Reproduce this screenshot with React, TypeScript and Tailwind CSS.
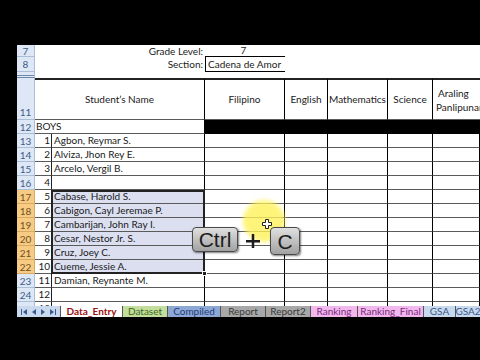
import clsx from 'clsx';

const cols = ['w-[80px]', 'w-[43px]', 'w-[60px]', 'w-[45px]', 'w-[47px]'];

const students: [number, string][] = [
    [1, 'Agbon, Reymar S.'],
    [2, 'Alviza, Jhon Rey E.'],
    [3, 'Arcelo, Vergil B.'],
    [4, ''],
    [5, 'Cabase, Harold S.'],
    [6, 'Cabigon, Cayl Jeremae P.'],
    [7, 'Cambarijan, John Ray I.'],
    [8, 'Cesar, Nestor Jr. S.'],
    [9, 'Cruz, Joey C.'],
    [10, 'Cueme, Jessie A.'],
    [11, 'Damian, Reynante M.'],
    [12, ''],
];

const RowHead = ({ n, sel }: { n: number; sel?: boolean }) => (
    <div
        className={clsx(
            'w-[18px] shrink-0 flex items-center justify-center border-r border-b text-[10px] leading-none',
            sel ? 'bg-[#f7cb84] border-[#d8ab62] text-[#6f5020]' : 'bg-[#dde7f5] border-[#a9bfd8] text-[#3d5b86]'
        )}
    >
        {n}
    </div>
);

const DataRow = ({ n, idx, name, sel }: { n: number; idx: number; name: string; sel: boolean }) => (
    <div className="flex h-[14px] shrink-0">
        <RowHead n={n} sel={sel} />
        <div className="w-[17px] shrink-0 border-r border-b border-r-[#222] border-b-[#5a5a5a] text-right pr-[1px] leading-[13px]">
            {idx}
        </div>
        <div
            className={clsx(
                'w-[153px] shrink-0 border-r border-b border-r-black border-b-[#5a5a5a] pl-[2px] leading-[13px] whitespace-nowrap',
                sel && 'bg-[#dbdff0]'
            )}
        >
            {name}
        </div>
        {cols.map((c) => (
            <div key={c} className={clsx(c, 'shrink-0 border-r border-b border-r-black border-b-[#5a5a5a]')} />
        ))}
    </div>
);

const Tab = ({ w, bg, color, label }: { w: string; bg: string; color: string; label: string }) => (
    <div className={clsx(w, bg, color, 'shrink-0 h-full flex justify-center overflow-hidden border-l border-l-[#555] leading-[11px]')}>
        {label}
    </div>
);

export default function App() {
    return (
        <div className="w-[480px] h-[360px] bg-black overflow-hidden relative font-['Lato',sans-serif] text-[10px] text-[#1a1a1a]">
            <div className="mt-[45px] ml-[17px] w-[463px] bg-white relative flex flex-col">
                {/* row 7 */}
                <div className="flex h-[12px]">
                    <RowHead n={7} />
                    <div className="w-[170px] shrink-0 text-right pr-[2px] leading-[12px]">Grade Level:</div>
                    <div className="w-[80px] shrink-0 border-b border-black text-center pr-[3px] leading-[11px]">7</div>
                </div>
                {/* row 8 */}
                <div className="flex h-[15px]">
                    <RowHead n={8} />
                    <div className="w-[170px] shrink-0 text-right pr-[2px] leading-[14px]">Section:</div>
                    <div className="w-[80px] shrink-0 border-l border-b border-black pl-[2px] leading-[14px] whitespace-nowrap">Cadena de Amor</div>
                </div>
                {/* hidden rows 9-10 */}
                <div className="flex h-[6px]">
                    <div className="w-[18px] shrink-0 bg-[#dde7f5] border-r border-[#a9bfd8] border-b-[3px] border-b-[#6f87a8] border-double" />
                </div>
                {/* row 11 header */}
                <div className="flex h-[42px]">
                    <div className="w-[18px] shrink-0 bg-[#dde7f5] border-r border-b border-[#a9bfd8] text-[#3d5b86] flex items-end justify-center pb-[2px] leading-none">
                        11
                    </div>
                    <div className="w-[170px] shrink-0 border-t-2 border-t-[#222] border-r border-r-black border-b border-b-[#5a5a5a] flex items-center justify-center">
                        Student’s Name
                    </div>
                    <div className="w-[80px] shrink-0 border-t-2 border-t-[#222] border-r border-r-black border-b border-b-[#5a5a5a] flex items-center justify-center">
                        Filipino
                    </div>
                    <div className="w-[43px] shrink-0 border-t-2 border-t-[#222] border-r border-r-black border-b border-b-[#5a5a5a] flex items-center justify-center">
                        English
                    </div>
                    <div className="w-[60px] shrink-0 border-t-2 border-t-[#222] border-r border-r-black border-b border-b-[#5a5a5a] flex items-center justify-center whitespace-nowrap">
                        Mathematics
                    </div>
                    <div className="w-[45px] shrink-0 border-t-2 border-t-[#222] border-r border-r-black border-b border-b-[#5a5a5a] flex items-center justify-center">
                        Science
                    </div>
                    <div className="w-[47px] shrink-0 border-t-2 border-t-[#222] border-b border-b-[#5a5a5a] flex flex-col justify-center pl-[3px] leading-[14px] whitespace-nowrap overflow-hidden">
                        <span className="pl-[2px]">Araling</span>
                        <span>Panlipunan</span>
                    </div>
                </div>
                {/* row 12 */}
                <div className="flex h-[14px]">
                    <RowHead n={12} />
                    <div className="w-[170px] shrink-0 border-r border-b border-r-black border-b-[#5a5a5a] pl-[1px] leading-[13px]">BOYS</div>
                    <div className="flex-1 bg-black" />
                </div>
                {students.map(([idx, name], i) => (
                    <DataRow key={idx} n={13 + i} idx={idx} name={name} sel={i >= 4 && i <= 9} />
                ))}
                {/* row 25, cut off */}
                <div className="h-[4px] overflow-hidden">
                    <div className="flex h-[14px]">
                        <RowHead n={25} />
                        <div className="w-[17px] shrink-0 border-r border-r-[#222] text-right pr-[1px] leading-[13px]">13</div>
                        <div className="w-[153px] shrink-0 border-r border-r-black" />
                        {cols.map((c) => (
                            <div key={c} className={clsx(c, 'shrink-0 border-r border-r-black')} />
                        ))}
                    </div>
                </div>
                {/* sheet tabs */}
                <div className="flex h-[11px] text-[10px] bg-[#e4ecf7]">
                    <div className="w-[43px] shrink-0 bg-[#c9d9ee] flex items-center justify-around px-[2px]">
                        <svg width="6" height="6" viewBox="0 0 6 6"><rect x="0" y="0" width="1" height="6" fill="#3a5a90" /><path d="M6 0 L2 3 L6 6 Z" fill="#3a5a90" /></svg>
                        <svg width="5" height="6" viewBox="0 0 5 6"><path d="M5 0 L1 3 L5 6 Z" fill="#3a5a90" /></svg>
                        <svg width="5" height="6" viewBox="0 0 5 6"><path d="M0 0 L4 3 L0 6 Z" fill="#3a5a90" /></svg>
                        <svg width="6" height="6" viewBox="0 0 6 6"><path d="M0 0 L4 3 L0 6 Z" fill="#3a5a90" /><rect x="5" y="0" width="1" height="6" fill="#3a5a90" /></svg>
                    </div>
                    <Tab w="w-[62px]" bg="bg-white" color="text-[#9a1212] font-bold" label="Data_Entry" />
                    <Tab w="w-[45px]" bg="bg-[#c2dd9c]" color="text-[#3c6a1c]" label="Dataset" />
                    <Tab w="w-[53px]" bg="bg-[#8ea8d6]" color="text-[#1f3c78]" label="Compiled" />
                    <Tab w="w-[45px]" bg="bg-[#a8a8a8]" color="text-[#3a3a3a]" label="Report" />
                    <Tab w="w-[45px]" bg="bg-[#a8a8a8]" color="text-[#3a3a3a]" label="Report2" />
                    <Tab w="w-[47px]" bg="bg-[#f2b8ee]" color="text-[#7a2a7a]" label="Ranking" />
                    <Tab w="w-[66px]" bg="bg-[#f2b8ee]" color="text-[#7a2a7a]" label="Ranking_Final" />
                    <Tab w="w-[32px]" bg="bg-[#c8d9ee]" color="text-[#3a5a8a]" label="GSA" />
                    <Tab w="w-[25px]" bg="bg-[#c8d9ee]" color="text-[#3a5a8a]" label="GSA2" />
                </div>

                {/* selection outline C17:C22 */}
                <div className="absolute left-[34px] top-[145px] w-[154px] h-[84px] border-2 border-[#222]" />
                <div className="absolute left-[185px] top-[226px] w-[5px] h-[5px] bg-[#222] border border-white" />
            </div>

            {/* key overlay */}
            <div className="absolute left-[243px] top-[200px] w-[42px] h-[42px] rounded-full bg-[#fff25a] opacity-80 blur-[2px]" />
            <div className="absolute left-[192px] top-[227px] w-[46px] h-[25px] rounded-[4px] border border-[#4a4a4a] bg-gradient-to-b from-[#e0e0e0] to-[#a2a2a2] shadow-[1px_1px_2px_rgba(0,0,0,0.5)] flex items-center justify-center font-['Liberation_Sans',sans-serif] text-[21px] text-[#1c1c1c] leading-none">
                Ctrl
            </div>
            <svg className="absolute left-[246px] top-[234px]" width="14" height="14" viewBox="0 0 14 14">
                <rect x="0" y="6" width="14" height="2.5" fill="#1c1c1c" />
                <rect x="5.75" y="0" width="2.5" height="14" fill="#1c1c1c" />
            </svg>
            <div className="absolute left-[270px] top-[227px] w-[30px] h-[28px] rounded-[4px] border border-[#4a4a4a] bg-gradient-to-b from-[#e0e0e0] to-[#a2a2a2] shadow-[1px_1px_2px_rgba(0,0,0,0.5)] flex items-center justify-center font-['Liberation_Sans',sans-serif] text-[21px] text-[#1c1c1c] leading-none">
                C
            </div>
            <svg className="absolute left-[262px] top-[219px]" width="10" height="10" viewBox="0 0 10 10">
                <path d="M3.5 0.5 H6.5 V3.5 H9.5 V6.5 H6.5 V9.5 H3.5 V6.5 H0.5 V3.5 H3.5 Z" fill="white" stroke="#222" strokeWidth="1" />
            </svg>
        </div>
    );
}
